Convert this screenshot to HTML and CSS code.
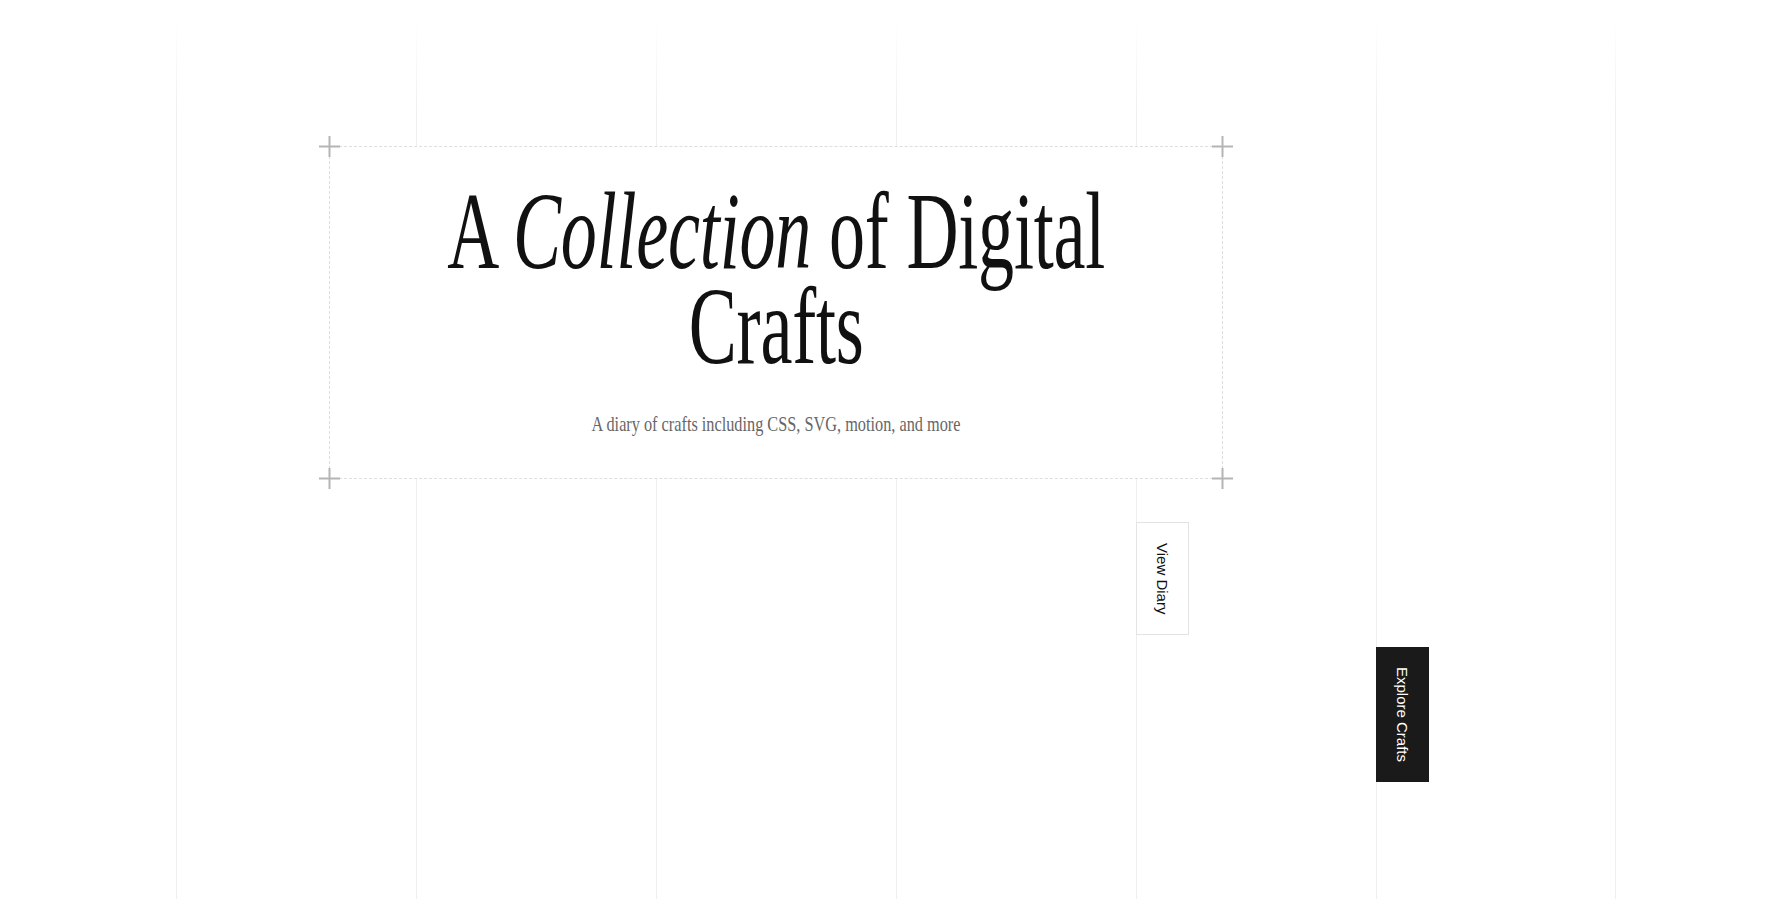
FILE: index.html
```html
<!DOCTYPE html>
<html lang="en">
<head>
<meta charset="utf-8">
<title>A Collection of Digital Crafts</title>
<link rel="stylesheet" href="styles.css">
</head>
<body>
<div class="grid-lines" aria-hidden="true">
  <div class="col"></div>
  <div class="col"></div>
  <div class="col"></div>
  <div class="col"></div>
  <div class="col"></div>
  <div class="col"></div>
</div>
<main class="page">
  <section class="hero">
    <svg class="corner corner-tl" viewBox="0 0 21 21"><path d="M10.5 0V21M0 10.5H21"/></svg>
    <svg class="corner corner-tr" viewBox="0 0 21 21"><path d="M10.5 0V21M0 10.5H21"/></svg>
    <svg class="corner corner-bl" viewBox="0 0 21 21"><path d="M10.5 0V21M0 10.5H21"/></svg>
    <svg class="corner corner-br" viewBox="0 0 21 21"><path d="M10.5 0V21M0 10.5H21"/></svg>
    <h1 class="title">A <em>Collection</em> of Digital<br>Crafts</h1>
    <p class="subtitle">A diary of crafts including CSS, SVG, motion, and more</p>
  </section>
  <nav class="actions">
    <a class="btn btn-light" href="#">View Diary</a>
    <a class="btn btn-dark" href="#">Explore Crafts</a>
  </nav>
</main>
</body>
</html>
```

FILE: styles.css
```css
* { box-sizing: border-box; }

html, body {
  margin: 0;
  padding: 0;
  background: #ffffff;
}

body {
  min-height: 899px;
  font-family: "Liberation Serif", "Times New Roman", serif;
  color: #151515;
  overflow: hidden;
}

.grid-lines {
  position: fixed;
  inset: 0;
  display: flex;
  padding-left: 176px;
  pointer-events: none;
  z-index: 0;
  -webkit-mask-image: linear-gradient(to bottom, transparent 20px, #000 120px);
  mask-image: linear-gradient(to bottom, transparent 20px, #000 120px);
}

.grid-lines .col {
  width: 240px;
  height: 100%;
  border-left: 1px solid #eeeeee;
}

.grid-lines .col:last-child {
  border-right: 1px solid #eeeeee;
}

.page {
  position: relative;
  z-index: 1;
  padding-left: 176px;
  padding-top: 146px;
}

.hero {
  position: relative;
  margin-left: 153px;
  width: 894px;
  height: 333px;
  background: #ffffff;
  border: 1px dashed #dedede;
  padding-top: 37px;
  display: flex;
  flex-direction: column;
  align-items: center;
  text-align: center;
}

.corner {
  position: absolute;
  width: 21px;
  height: 21px;
  fill: none;
  stroke: #b5b5b5;
  stroke-width: 2;
}

.corner-tl { left: -11px; top: -11px; }
.corner-tr { right: -11px; top: -11px; }
.corner-bl { left: -11px; bottom: -11px; }
.corner-br { right: -11px; bottom: -11px; }

.title {
  margin: 0;
  flex: none;
  font-family: "Liberation Serif", "Times New Roman", serif;
  font-weight: 400;
  font-size: 110px;
  line-height: 95px;
  letter-spacing: -0.3px;
  color: #111111;
  white-space: nowrap;
  transform: scaleX(0.655);
  transform-origin: center;
}

.title em {
  font-style: italic;
}

.subtitle {
  margin: 36px 0 0;
  flex: none;
  font-family: "Liberation Serif", "Times New Roman", serif;
  font-size: 21px;
  line-height: 28px;
  color: #666666;
  white-space: nowrap;
  transform: scaleX(0.775);
  transform-origin: center;
}

.actions {
  display: grid;
  grid-template-columns: repeat(6, 240px);
  align-items: start;
}

.btn {
  display: block;
  justify-self: start;
  writing-mode: vertical-rl;
  font-family: "Liberation Sans", Arial, sans-serif;
  font-size: 15px;
  line-height: 21px;
  padding: 19px 15px;
  border: 1px solid;
  text-decoration: none;
}

.btn-light {
  grid-column: 5;
  margin-top: 43px;
  padding: 20px 15px;
  background: #ffffff;
  border-color: #e3e3e3;
  color: #111111;
}

.btn-dark {
  grid-column: 6;
  margin-top: 168px;
  background: #1a1a1a;
  border-color: #1a1a1a;
  color: #ffffff;
}
```
